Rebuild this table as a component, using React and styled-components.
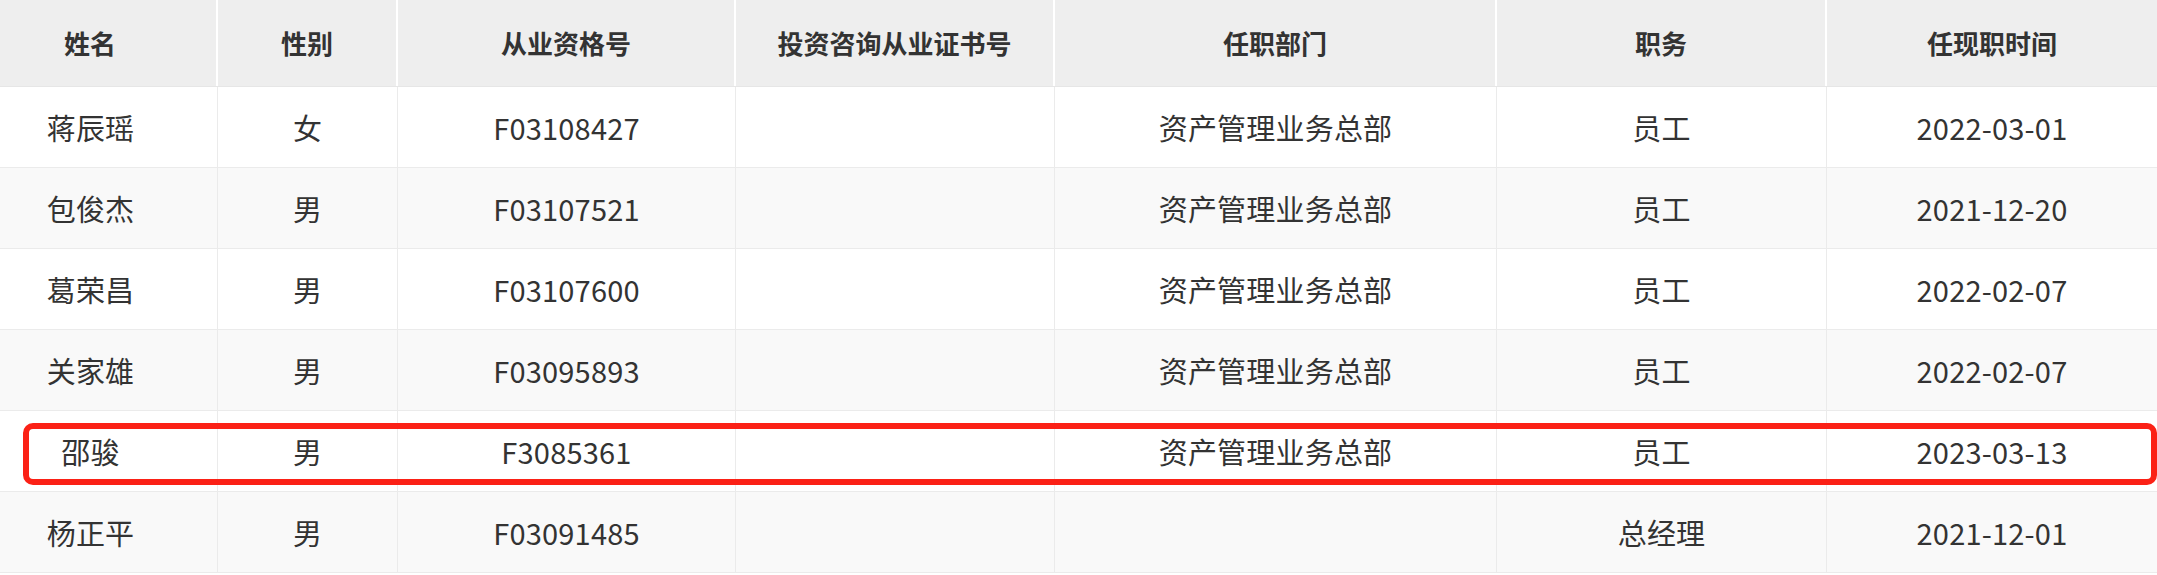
import styled, { createGlobalStyle } from "styled-components";

const GlobalStyle = createGlobalStyle`
    html, body {
        margin: 0;
        padding: 0;
        background: #ffffff;
    }
`;

const columns = "218px 180px 338px 319px 442px 330px 1fr";

const headers = ["姓名", "性别", "从业资格号", "投资咨询从业证书号", "任职部门", "职务", "任现职时间"];

const rows = [
    ["蒋辰瑶", "女", "F03108427", "", "资产管理业务总部", "员工", "2022-03-01"],
    ["包俊杰", "男", "F03107521", "", "资产管理业务总部", "员工", "2021-12-20"],
    ["葛荣昌", "男", "F03107600", "", "资产管理业务总部", "员工", "2022-02-07"],
    ["关家雄", "男", "F03095893", "", "资产管理业务总部", "员工", "2022-02-07"],
    ["邵骏", "男", "F3085361", "", "资产管理业务总部", "员工", "2023-03-13"],
    ["杨正平", "男", "F03091485", "", "", "总经理", "2021-12-01"],
];

export default function App() {
    return (
        <>
            <GlobalStyle />
            <TableWrap>
                <HeadRow>
                    {headers.map((h, i) => (
                        <HeadCell key={h} first={i === 0}>{h}</HeadCell>
                    ))}
                </HeadRow>
                {rows.map((r, ri) => (
                    <BodyRow key={r[0]} striped={ri % 2 === 1}>
                        {r.map((c, ci) => (
                            <Cell key={ci} first={ci === 0}>{c}</Cell>
                        ))}
                    </BodyRow>
                ))}
                <Highlight />
            </TableWrap>
        </>
    );
}

const TableWrap = styled.div`
    position: relative;
    width: 2157px;
    font-family: "Noto Sans CJK SC", "Noto Sans", sans-serif;
    color: #333333;
`;

const HeadRow = styled.div`
    display: grid;
    grid-template-columns: ${columns};
    height: 87px;
    box-sizing: border-box;
    background: #eeeeee;
    border-bottom: 1px solid #e6e6e6;
`;

const HeadCell = styled.div`
    display: flex;
    align-items: center;
    justify-content: center;
    border-right: 2px solid #ffffff;
    font-size: 26px;
    font-weight: 700;
    padding-right: ${({ first }) => (first ? "36px" : "0")};
    padding-bottom: 2px;

    &:last-child {
        border-right: none;
    }
`;

const BodyRow = styled.div`
    display: grid;
    grid-template-columns: ${columns};
    height: 81px;
    box-sizing: border-box;
    background: ${({ striped }) => (striped ? "#f9f9f9" : "#ffffff")};
    border-bottom: 1px solid #ebebeb;
`;

const Cell = styled.div`
    display: flex;
    align-items: center;
    justify-content: center;
    border-right: 1px solid #ebebeb;
    font-size: 29px;
    font-weight: 400;
    letter-spacing: 0.2px;
    padding-right: ${({ first }) => (first ? "36px" : "0")};

    &:last-child {
        border-right: none;
    }
`;

const Highlight = styled.div`
    position: absolute;
    top: 423px;
    left: 23px;
    width: 2134px;
    height: 62px;
    box-sizing: border-box;
    border: 6px solid #fb2116;
    border-radius: 10px;
    pointer-events: none;
`;
